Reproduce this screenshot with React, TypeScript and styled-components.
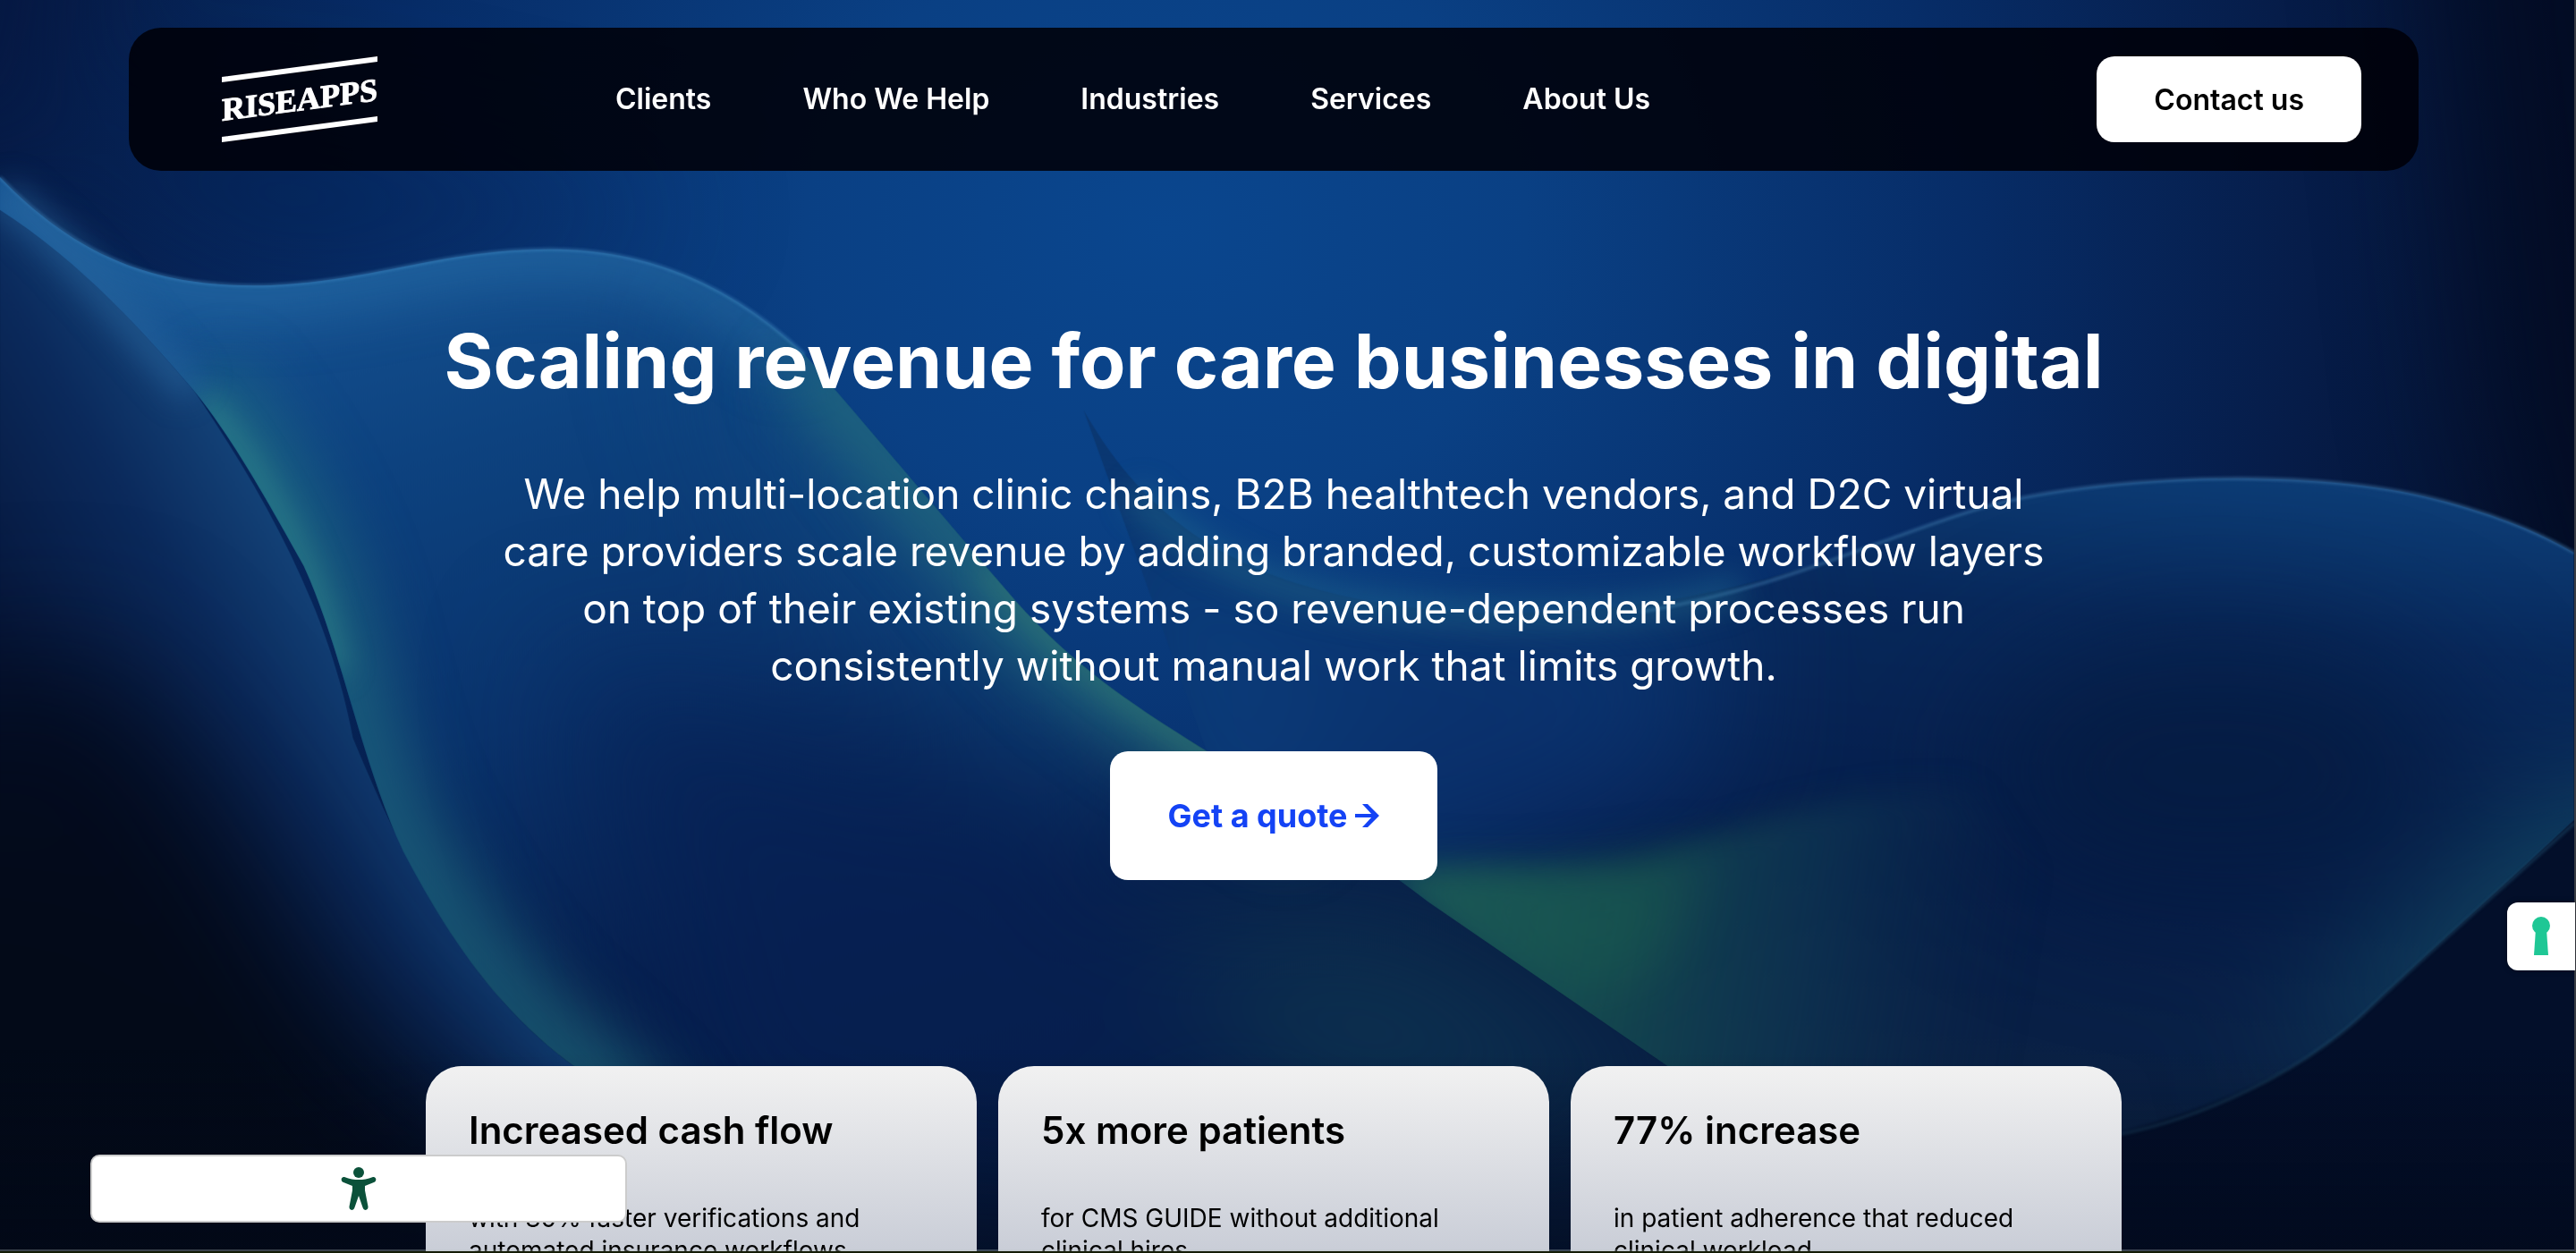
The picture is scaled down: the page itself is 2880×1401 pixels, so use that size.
import React from 'react';
import styled, { createGlobalStyle } from 'styled-components';

const NAV = ['Clients', 'Who We Help', 'Industries', 'Services', 'About Us'];

const RESULTS = [
  { title: 'Increased cash flow', text: 'with 80% faster verifications and automated insurance workflows' },
  { title: '5x more patients', text: 'for CMS GUIDE without additional clinical hires' },
  { title: '77% increase', text: 'in patient adherence that reduced clinical workload' },
];

const GlobalStyle = createGlobalStyle`
  *, *::before, *::after { box-sizing: border-box; }
  body {
    margin: 0;
    background: #020a20;
    font-family: Inter, "Liberation Sans", sans-serif;
    -webkit-font-smoothing: antialiased;
  }
`;

const Page = styled.div`
  position: relative;
  height: 100vh;
  overflow: hidden;
  padding: 31px 30px 0 0;
  border-right: 2px solid #3a3d44;
  border-bottom: 2px solid #141c06;

  &::after {
    content: '';
    position: absolute;
    inset: auto 0 0 0;
    height: 2px;
    background: rgba(190, 200, 200, 0.3);
  }
`;

const Backdrop = styled.svg`
  position: absolute;
  inset: 0;
  width: 100%;
  height: 100%;

  filter {
    color-interpolation-filters: sRGB;
  }
`;

const Content = styled.div`
  position: relative;
`;

const Header = styled.header`
  display: flex;
  align-items: center;
  width: 90%;
  max-width: 2560px;
  margin: 0 auto;
  padding: 32px 64px 32px 104px;
  border-radius: 36px;
  background: rgba(0, 0, 8, 0.88);
`;

const LogoLink = styled.a`
  display: block;
  flex: none;
  height: 96px;
`;

const Nav = styled.nav`
  display: flex;
  flex: 1;
  gap: 102px;
  margin-left: 266px;
`;

const NavLink = styled.a`
  color: #fff;
  font-size: 32px;
  font-weight: 600;
  line-height: 40px;
  text-decoration: none;
  white-space: nowrap;
`;

const Button = styled.button<{ $large?: boolean }>`
  display: inline-flex;
  align-items: center;
  justify-content: center;
  gap: 8px;
  height: ${(p) => (p.$large ? 144 : 96)}px;
  padding: 0 64px;
  border: 0;
  border-radius: 20px;
  background: #fff;
  color: ${(p) => (p.$large ? '#1443f5' : '#000')};
  font-family: inherit;
  font-size: ${(p) => (p.$large ? 36 : 32)}px;
  font-weight: ${(p) => (p.$large ? 700 : 600)};
  white-space: nowrap;
  cursor: pointer;
`;

const Hero = styled.section`
  display: flex;
  flex-direction: column;
  align-items: center;
  padding-top: 165px;
  color: #fff;
  text-align: center;
`;

const Title = styled.h1`
  margin: 0 0 68px;
  font-size: 84px;
  font-weight: 700;
  line-height: 96px;
`;

const Lead = styled.p`
  max-width: 1760px;
  margin: 0 0 64px;
  font-size: 46px;
  font-weight: 400;
  line-height: 64px;
`;

const Cards = styled.section`
  display: grid;
  grid-template-columns: repeat(3, 1fr);
  gap: 24px;
  max-width: 1896px;
  margin: 208px auto 0;
`;

const Card = styled.article`
  min-height: 380px;
  padding: 48px;
  border-radius: 40px;
  background: linear-gradient(#f1f1f1, #c9cdd7 208px, #aab2c4);
  color: #000;
`;

const CardTitle = styled.h2`
  margin: 0 0 56px;
  font-size: 42px;
  font-weight: 600;
  line-height: 48px;
`;

const CardText = styled.p`
  margin: 0;
  font-size: 28px;
  line-height: 36px;
`;

const AccessibilityButton = styled.button`
  position: fixed;
  left: 101px;
  bottom: 34px;
  display: flex;
  align-items: center;
  justify-content: center;
  width: 600px;
  height: 76px;
  padding: 0;
  border: 2px solid #ccc;
  border-radius: 10px;
  background: #fff;
  cursor: pointer;
`;

const PrivacyButton = styled.button`
  position: fixed;
  right: 1px;
  bottom: 316px;
  display: flex;
  align-items: center;
  justify-content: center;
  width: 76px;
  height: 76px;
  padding: 0;
  border: 0;
  border-radius: 12px 0 0 12px;
  background: #fff;
  box-shadow: 0 0 6px rgba(0, 0, 0, 0.4);
  cursor: pointer;
`;

const LogoText = styled.text`
  fill: #fff;
  stroke: #fff;
  stroke-width: 1px;
  font: 700 36px "Liberation Serif", serif;
`;

function Logo() {
  return (
    <svg width="174" height="96" viewBox="0 0 174 96" role="img" aria-label="RISEAPPS">
      <path d="M0 23 174 0V6L0 29ZM0 90 174 67V73L0 96Z" fill="#fff" />
      <g transform="skewY(-7.5)">
        <LogoText x="87" y="72" textAnchor="middle">RISEAPPS</LogoText>
      </g>
    </svg>
  );
}

function Arrow() {
  return (
    <svg width="28" height="26" viewBox="0 0 28 26" aria-hidden="true">
      <path d="M0 13H24" fill="none" stroke="#1443f5" strokeWidth="4" />
      <path d="M8 0H14L27 13 14 26H8L20 13Z" fill="#1443f5" />
    </svg>
  );
}

function Waves() {
  return (
    <Backdrop viewBox="0 0 1568 763" preserveAspectRatio="none" aria-hidden="true">
      <defs>
        <radialGradient id="glow" gradientUnits="userSpaceOnUse" cx="0" cy="0" r="1" gradientTransform="translate(710 140) scale(880 720)">
          <stop offset="0" stopColor="#0a468e" />
          <stop offset="0.25" stopColor="#0a4084" />
          <stop offset="0.55" stopColor="#072d68" />
          <stop offset="0.8" stopColor="#061c48" />
          <stop offset="1" stopColor="#04112e" />
        </radialGradient>
        <linearGradient id="ribbon" gradientUnits="userSpaceOnUse" x1="330" y1="140" x2="480" y2="700">
          <stop offset="0" stopColor="#144f8e" />
          <stop offset="0.2" stopColor="#0d427f" />
          <stop offset="0.5" stopColor="#0a336c" />
          <stop offset="0.8" stopColor="#07204e" />
          <stop offset="1" stopColor="#081d42" />
        </linearGradient>
        <linearGradient id="left" gradientUnits="userSpaceOnUse" x1="150" y1="270" x2="-20" y2="370">
          <stop offset="0" stopColor="#14447a" />
          <stop offset="0.4" stopColor="#0b2a5c" />
          <stop offset="1" stopColor="#06163a" />
        </linearGradient>
        <linearGradient id="right" gradientUnits="userSpaceOnUse" x1="1300" y1="285" x2="1260" y2="700">
          <stop offset="0" stopColor="#0d3d76" />
          <stop offset="0.22" stopColor="#08295c" />
          <stop offset="0.6" stopColor="#061d49" />
          <stop offset="1" stopColor="#0c2344" />
        </linearGradient>
        <linearGradient id="teal" gradientUnits="userSpaceOnUse" x1="870" y1="540" x2="1230" y2="600">
          <stop offset="0" stopColor="#1a5558" />
          <stop offset="0.35" stopColor="#154a50" stopOpacity="0.85" />
          <stop offset="0.65" stopColor="#103a54" stopOpacity="0.6" />
          <stop offset="1" stopColor="#0d2a4c" stopOpacity="0" />
        </linearGradient>
        <linearGradient id="fade" gradientUnits="userSpaceOnUse" x1="0" y1="640" x2="0" y2="763">
          <stop offset="0" stopColor="#020817" stopOpacity="0" />
          <stop offset="1" stopColor="#020817" stopOpacity="0.6" />
        </linearGradient>
        <filter id="b1" x="-20%" y="-20%" width="140%" height="140%"><feGaussianBlur stdDeviation="1" /></filter>
        <filter id="b8" x="-50%" y="-50%" width="200%" height="200%"><feGaussianBlur stdDeviation="9" /></filter>
        <filter id="b20" x="-60%" y="-60%" width="220%" height="220%"><feGaussianBlur stdDeviation="18" /></filter>
        <filter id="b40" x="-80%" y="-80%" width="260%" height="260%"><feGaussianBlur stdDeviation="42" /></filter>
        <clipPath id="ribbonClip">
          <path d="M0 108C50 160 100 176 165 174C230 171 270 152 335 152C400 152 450 178 490 216C530 262 570 310 620 368C660 412 700 436 735 458C790 490 830 520 870 550L1030 660V763H400L352 652C305 618 275 575 246 520C220 465 208 395 185 345C160 300 140 265 118 238C90 205 50 160 0 128Z" />
        </clipPath>
        <clipPath id="rightClip">
          <path d="M660 250C700 320 760 366 900 374C1060 376 1130 330 1220 306C1300 288 1420 286 1490 306C1530 317 1550 327 1568 337V500C1520 545 1480 580 1440 618C1400 655 1340 690 1250 700L1030 660L845 537L735 458Z" />
        </clipPath>
      </defs>

      <rect width="1568" height="763" fill="url(#glow)" />

      <g filter="url(#b40)">
        <path d="M1480-100H1700V420H1568L1520 260Z" fill="#020a22" opacity="0.85" />
        <path d="M-100-100H60L10 90H-100Z" fill="#061742" opacity="0.7" />
        <path d="M-60 60 200 80 420 130 330 150 160 165Z" fill="#041f52" opacity="0.5" />
      </g>

      <path d="M0 118C50 160 90 205 118 238C160 300 200 370 215 450C240 510 270 580 352 652L420 763H0Z" fill="url(#left)" />
      <g filter="url(#b40)">
        <path d="M-100 420 60 400 130 480 220 620 340 720 360 900H-100Z" fill="#030b1e" />
        <path d="M-100 520H60L240 660V900H-100Z" fill="#030a18" />
      </g>

      <g clipPath="url(#rightClip)">
        <rect x="600" y="240" width="968" height="523" fill="url(#right)" />
        <g filter="url(#b40)">
          <path d="M600 200 760 320 960 360 1080 355 900 540 700 540Z" fill="#0b3c7a" />
          <path d="M740 420 960 400 1080 460 900 540Z" fill="#0a2f6a" />
          <ellipse cx="1350" cy="470" rx="150" ry="80" fill="#051a40" opacity="0.8" />
          <path d="M1600 470 1480 570 1380 650 1520 620 1640 540Z" fill="#17566c" opacity="0.9" />
        </g>
        <path d="M840 532C880 524 940 534 1000 524C1070 500 1130 478 1200 482L1300 600 1280 720H1050Z" fill="url(#teal)" filter="url(#b8)" />
        <path d="M850 530C920 540 980 530 1040 520L1010 590 960 610Z" fill="#1f6a50" opacity="0.35" filter="url(#b20)" />
      </g>
      <path d="M1000 373C1090 358 1150 325 1220 306C1300 288 1420 286 1490 306C1530 317 1550 327 1568 337" fill="none" stroke="#4a86b8" strokeOpacity="0.45" strokeWidth="2" filter="url(#b1)" />
      <path d="M690 300C740 350 790 368 900 374C960 376 1010 374 1060 358" fill="none" stroke="#2b7d95" strokeOpacity="0.4" strokeWidth="16" filter="url(#b8)" />

      <g clipPath="url(#ribbonClip)">
        <rect y="90" width="1050" height="673" fill="url(#ribbon)" />
        <g filter="url(#b40)">
          <path d="M340 400 640 480 780 640 660 763 420 700Z" fill="#061f52" opacity="0.7" />
          <path d="M420 180 500 220 740 460 640 480 480 330Z" fill="#115088" opacity="0.5" />
          <path d="M700 560 860 560 1040 680 800 700Z" fill="#0e3452" opacity="0.8" />
        </g>
        <path d="M0 108C50 160 100 176 165 174C230 171 270 152 335 152C400 152 450 178 490 216" fill="none" stroke="#3484bb" strokeOpacity="0.4" strokeWidth="34" filter="url(#b20)" />
        <path d="M490 216C530 262 570 310 620 368C660 412 700 436 735 458L800 500" fill="none" stroke="#2a7880" strokeOpacity="0.6" strokeWidth="50" filter="url(#b20)" />
        <path d="M600 345C650 402 700 436 745 463" fill="none" stroke="#3f8c72" strokeOpacity="0.55" strokeWidth="12" filter="url(#b8)" />
        <path d="M118 238C150 275 178 320 196 375C212 430 218 480 250 530C280 580 310 620 352 652L400 700" fill="none" stroke="#226f80" strokeOpacity="0.6" strokeWidth="60" filter="url(#b20)" />
        <path d="M122 243C160 290 190 345 205 410" fill="none" stroke="#3c9a90" strokeOpacity="0.6" strokeWidth="12" filter="url(#b8)" />
      </g>

      <path d="M0 108C50 160 100 176 165 174C230 171 270 152 335 152C400 152 450 178 490 216" fill="none" stroke="#4b97cc" strokeOpacity="0.4" strokeWidth="2" filter="url(#b1)" />
      <path d="M0 118C40 145 80 200 118 238" fill="none" stroke="#2a68a0" strokeOpacity="0.5" strokeWidth="22" filter="url(#b8)" />

      <path d="M1568 502C1520 545 1480 580 1440 618C1400 655 1340 682 1250 700V763H1568Z" fill="#030f2a" filter="url(#b1)" />
      <path d="M1568 502C1520 545 1480 580 1440 618C1400 655 1340 682 1290 692" fill="none" stroke="#2f6a8a" strokeOpacity="0.35" strokeWidth="2" filter="url(#b1)" />
      <rect y="640" width="1568" height="123" fill="url(#fade)" />
    </Backdrop>
  );
}

export default function App() {
  return (
    <Page>
      <GlobalStyle />
      <Waves />
      <Content>
        <Header>
          <LogoLink href="#"><Logo /></LogoLink>
          <Nav>
            {NAV.map((label) => <NavLink key={label} href="#">{label}</NavLink>)}
          </Nav>
          <Button type="button">Contact us</Button>
        </Header>
        <main>
          <Hero>
            <Title>Scaling revenue for care businesses in digital</Title>
            <Lead>
              We help multi-location clinic chains, B2B healthtech vendors, and D2C virtual care providers scale
              revenue by adding branded, customizable workflow layers on top of their existing systems - so
              revenue-dependent processes run consistently without manual work that limits growth.
            </Lead>
            <Button type="button" $large>Get a quote <Arrow /></Button>
          </Hero>
          <Cards>
            {RESULTS.map((r) => (
              <Card key={r.title}>
                <CardTitle>{r.title}</CardTitle>
                <CardText>{r.text}</CardText>
              </Card>
            ))}
          </Cards>
        </main>
      </Content>
      <AccessibilityButton type="button" aria-label="Accessibility options">
        <svg width="40" height="50" viewBox="0 0 40 50" fill="#0b513a" aria-hidden="true">
          <circle cx="20" cy="7" r="6" />
          <path d="M4 12C10 14.500 15 15 20 15S30 14.500 36 12C40 11.500 40.500 17 37 18L27 22V27L30.500 45C31 50 25.500 50 24.500 46L20 33 15.500 46C14.500 50 9 50 9.500 45L13 27V22L3 18C-.5 17 0 11.500 4 12Z" />
        </svg>
      </AccessibilityButton>
      <PrivacyButton type="button" aria-label="Privacy preferences">
        <svg width="20" height="44" viewBox="0 0 20 44" fill="#1fc795" aria-hidden="true">
          <circle cx="10" cy="10" r="10" />
          <path d="M4 14H16L18 43H2Z" />
        </svg>
      </PrivacyButton>
    </Page>
  );
}
